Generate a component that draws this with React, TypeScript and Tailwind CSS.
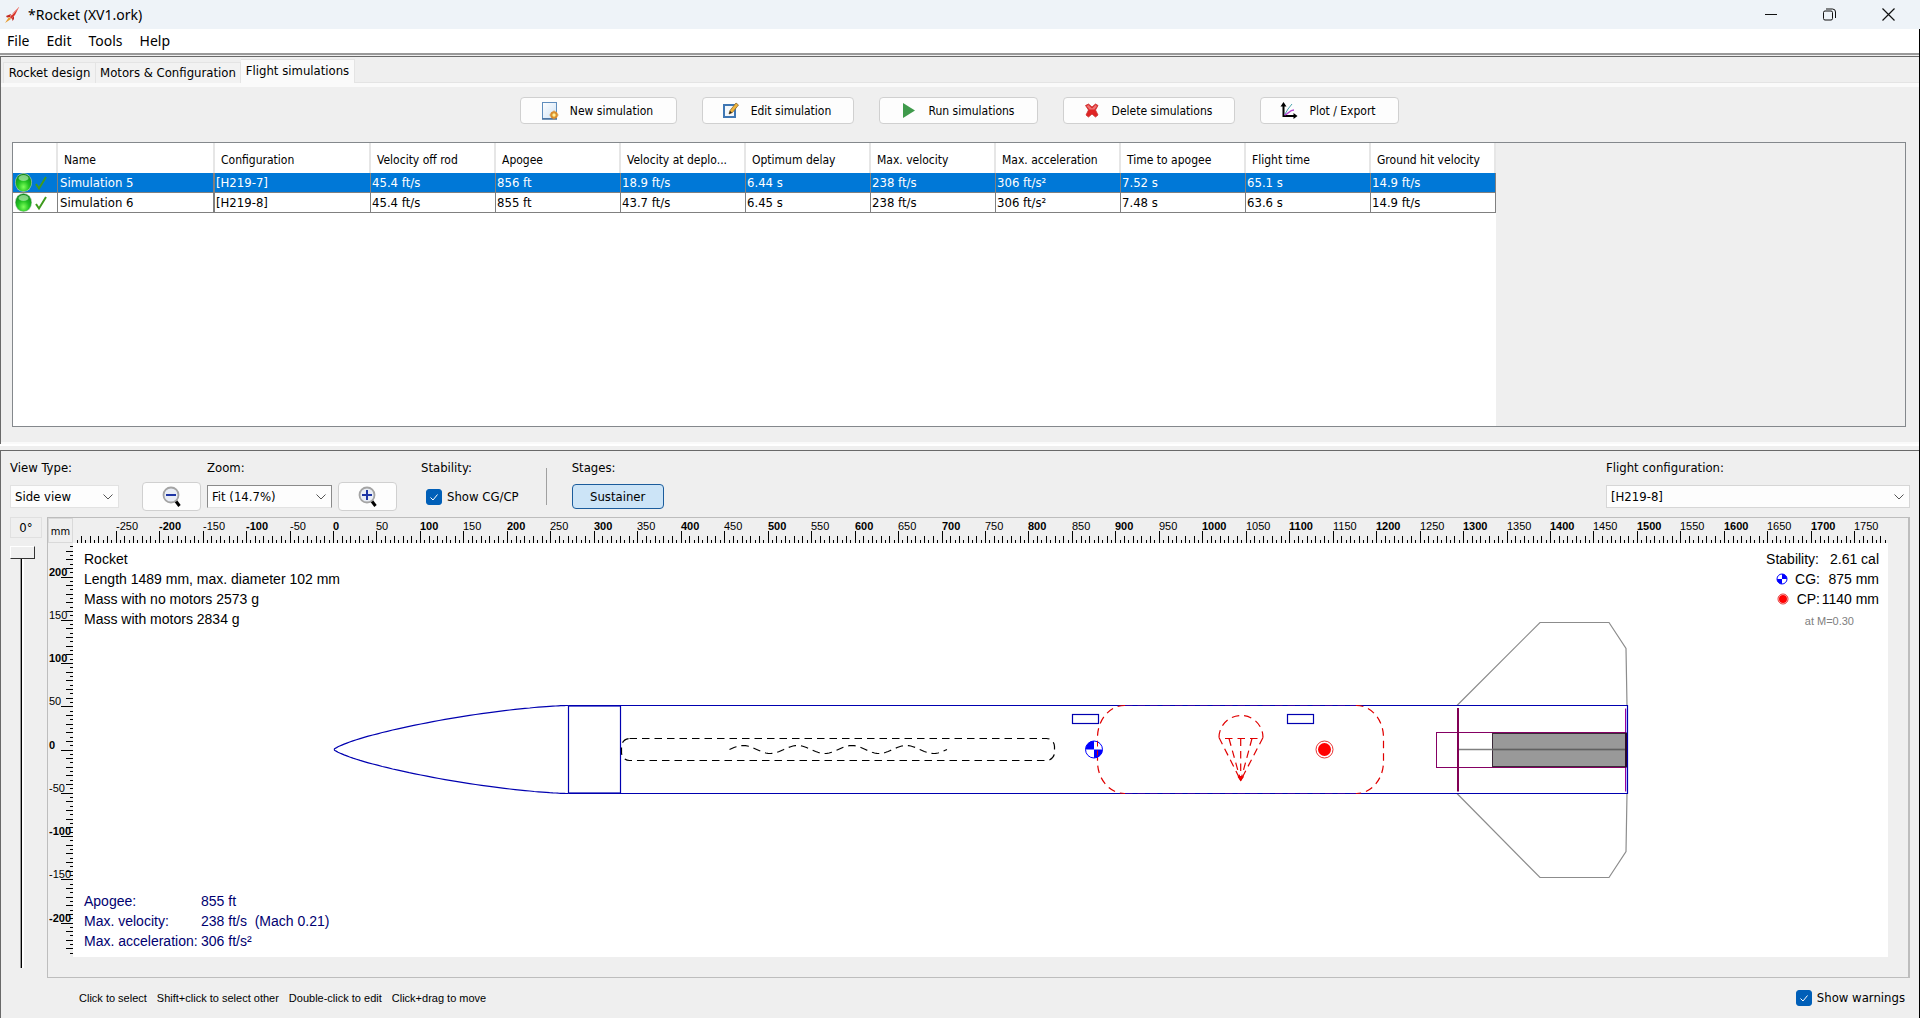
import { useState } from 'react'
import type { ReactNode } from 'react'

interface Simulation {
  name: string
  values: string[]
}

const columns = [
  'Name',
  'Configuration',
  'Velocity off rod',
  'Apogee',
  'Velocity at deplo...',
  'Optimum delay',
  'Max. velocity',
  'Max. acceleration',
  'Time to apogee',
  'Flight time',
  'Ground hit velocity',
]

const simulations: Simulation[] = [
  {
    name: 'Simulation 5',
    values: ['[H219-7]', '45.4 ft/s', '856 ft', '18.9 ft/s', '6.44 s', '238 ft/s', '306 ft/s²', '7.52 s', '65.1 s', '14.9 ft/s'],
  },
  {
    name: 'Simulation 6',
    values: ['[H219-8]', '45.4 ft/s', '855 ft', '43.7 ft/s', '6.45 s', '238 ft/s', '306 ft/s²', '7.48 s', '63.6 s', '14.9 ft/s'],
  },
]

// pixels per millimetre at the current zoom
const SCALE_X = 0.8693
const SCALE_Y = 0.865
const ORIGIN_X = 260
const ORIGIN_Y = 206.5

function RocketIcon() {
  return (
    <svg width="16" height="18" viewBox="0 0 16 18">
      <path d="M15 1 10 6 6 11 7 13 11 9Z" fill="#d8352b" />
      <path d="M7 8 2 10 3 11.500 6 11ZM8 12 8.500 15 10 13 10 10Z" fill="#c22a24" />
      <path d="M5 11 1 17 7 13Z" fill="#e79a2c" />
      <path d="M15 1 8 9" stroke="#f2a69f" strokeWidth="1" />
    </svg>
  )
}

function TitleBar() {
  return (
    <header className="flex h-[29px] shrink-0 items-center bg-[#eef3f8] pr-0.5 pl-1 font-['Noto_Sans',sans-serif] text-sm">
      <RocketIcon />
      <h1 className="ml-2 text-black">*Rocket (XV1.ork)</h1>
      <div className="ml-auto flex h-full">
        <button type="button" aria-label="Minimize" className="flex w-[58px] items-center justify-center">
          <svg width="12" height="12" stroke="#111">
            <path d="M0 5.5H12" />
          </svg>
        </button>
        <button type="button" aria-label="Restore" className="flex w-[58px] items-center justify-center">
          <svg width="13" height="13" fill="none" stroke="#111">
            <rect x="0.5" y="3" width="9" height="9" rx="1.5" />
            <path d="M3 1H9.500A3 3 0 0 1 12.500 4V10" />
          </svg>
        </button>
        <button type="button" aria-label="Close" className="flex w-[60px] items-center justify-center">
          <svg width="13" height="13" stroke="#111" strokeWidth="1.2">
            <path d="M0.500 0.500 12.500 12.500M12.500 0.500 0.500 12.500" />
          </svg>
        </button>
      </div>
    </header>
  )
}

function MenuBar() {
  return (
    <nav className="flex h-[26px] shrink-0 items-center gap-[17px] border-b-2 border-[#9a9a9a] bg-white pl-[7px] font-['Noto_Sans',sans-serif] text-sm">
      {['File', 'Edit', 'Tools', 'Help'].map((item) => (
        <button type="button" key={item}>
          {item}
        </button>
      ))}
    </nav>
  )
}

function Tabs() {
  return (
    <div role="tablist" className="flex h-[30px] items-end border-b-4 border-[#fafafa] pl-0.5">
      <button type="button" role="tab" aria-selected="false" className="h-[21px] w-[93px] border border-b-0 border-[#e4e4e4] bg-[#f2f2f2]">
        Rocket design
      </button>
      <button type="button" role="tab" aria-selected="false" className="h-[21px] w-[145px] border border-l-0 border-b-0 border-[#e4e4e4] bg-[#f2f2f2]">
        Motors &amp; Configuration
      </button>
      <button type="button" role="tab" aria-selected="true" className="h-6 w-[114px] border border-l-0 border-b-0 border-[#e4e4e4] bg-[#fafafa] pb-0.5">
        Flight simulations
      </button>
      <div className="flex-1 border-b border-[#e4e4e4]" />
    </div>
  )
}

function NewIcon() {
  return (
    <svg width="18" height="20" viewBox="0 0 18 20">
      <defs>
        <linearGradient id="page" x1="0" y1="0" x2="1" y2="1">
          <stop offset="0" stopColor="#ffffff" />
          <stop offset="1" stopColor="#cfe2f5" />
        </linearGradient>
      </defs>
      <rect x="1.500" y="1.500" width="14" height="16" fill="url(#page)" stroke="#5f8dbd" />
      <path d="M1 18H16" stroke="#466f9e" strokeWidth="1.500" />
      <circle cx="13" cy="14" r="3" fill="#f8c64a" stroke="#d88a2a" strokeWidth="1.500" />
      <path d="M13 9.500V18.500M8.500 14H17.500M10 11 16 17M16 11 10 17" stroke="#dc9536" strokeWidth="1" />
      <circle cx="13" cy="14" r="1.500" fill="#fff0a0" />
    </svg>
  )
}

function EditIcon() {
  return (
    <svg width="18" height="18" viewBox="0 0 18 18">
      <rect x="2" y="3" width="11" height="12" fill="#f4f8fc" stroke="#3f77b4" strokeWidth="2" />
      <path d="M7 12 8 8.500 14 1 16.500 3 10.500 10.500Z" fill="#f0b43c" stroke="#8a6a30" strokeWidth="0.800" />
      <path d="M7 12 8 9 10 10.500Z" fill="#222" />
    </svg>
  )
}

function RunIcon() {
  return (
    <svg width="18" height="18" viewBox="0 0 18 18">
      <path d="M3 1 15 8.500 3 16Z" fill="#3f9a4b" />
    </svg>
  )
}

function DeleteIcon() {
  return (
    <svg width="18" height="18" viewBox="0 0 18 18">
      <path
        d="M2.500 3.500 5.500 2 9 5 12.500 2 15 3.500 12.500 8 15 13 12.500 15 9 12 5.500 15 3 13 5.500 8Z"
        fill="#e02424"
        stroke="#c83030"
        strokeWidth="0.800"
      />
      <path d="M3.500 4 5.500 3 9 6.500 12.500 3 14 4 11.500 7.500H6.500Z" fill="#ee7474" />
    </svg>
  )
}

function PlotIcon() {
  return (
    <svg width="18" height="18" viewBox="0 0 18 18" fill="none">
      <path d="M3.500 2V14H16" stroke="#000" strokeWidth="2" />
      <path d="M0.500 4.500 3.500 0 6.500 4.500ZM13.500 11 17.500 14 13.500 17Z" fill="#000" />
      <path d="M4.500 13 8 7 12 2" stroke="#4aa3ad" />
      <path d="M4.500 13C9 12 9 8 14 8" stroke="#b445d0" strokeWidth="1.500" />
    </svg>
  )
}

interface ActionButtonProps {
  icon: ReactNode
  label: string
  className: string
}

function ActionButton({ icon, label, className }: ActionButtonProps) {
  return (
    <button
      type="button"
      className={`flex h-[27px] items-center justify-center gap-[11px] rounded border border-[#d0d0d0] bg-[#fdfdfd] pr-0.5 text-xs ${className}`}
    >
      {icon}
      {label}
    </button>
  )
}

function StatusCell({ id }: { id: string }) {
  return (
    <svg width="40" height="19" viewBox="0 0 40 19" className="block">
      <defs>
        <radialGradient id={id} cx="0.5" cy="0.75" r="0.7">
          <stop offset="0" stopColor="#7dff5a" />
          <stop offset="0.5" stopColor="#22c322" />
          <stop offset="1" stopColor="#118a1c" />
        </radialGradient>
      </defs>
      <ellipse cx="10.500" cy="9.500" rx="8.500" ry="9.500" fill="#9fc5a4" />
      <ellipse cx="10.500" cy="9.500" rx="7.800" ry="8.800" fill={`url(#${id})`} />
      <ellipse cx="10.500" cy="5" rx="5" ry="3" fill="#c9f5c4" opacity="0.600" />
      <path d="M23 11 26 15.500 33 4" fill="none" stroke="#3f9a1e" strokeWidth="2" />
    </svg>
  )
}

function SimulationTable() {
  const [selected, setSelected] = useState(0)

  return (
    <div className="mr-[13px] mb-[15px] ml-[11px] flex flex-1 overflow-hidden border border-[#84888c]">
      <div className="bg-white">
        <table className="w-[1483px] table-fixed border-separate border-spacing-0 text-left">
          <colgroup>
            <col className="w-[45px]" />
            <col className="w-[157px]" />
            <col className="w-[156px]" />
          </colgroup>
          <thead>
            <tr className="text-xs">
              <th aria-label="Status" className="h-[30px] border-r-2 border-[#e6e6e6] p-0" />
              {columns.map((column) => (
                <th key={column} scope="col" className="h-[30px] border-r-2 border-[#e6e6e6] pt-[3px] pr-0 pb-0 pl-[6px] font-normal whitespace-nowrap">
                  {column}
                </th>
              ))}
            </tr>
          </thead>
          <tbody>
            {simulations.map((sim, index) => (
              <tr
                key={sim.name}
                onClick={() => setSelected(index)}
                className={index === selected ? 'bg-[#0078d7] leading-4 text-white' : 'bg-white leading-4'}
              >
                <td className="h-5 border-r border-b border-[#808080] p-0">
                  <StatusCell id={`ball-${index}`} />
                </td>
                <td className="h-5 border-r-2 border-b border-[#808080] py-0 pr-0 pl-0.5">{sim.name}</td>
                {sim.values.map((value, i) => (
                  <td key={columns[i + 1]} className="h-5 border-r border-b border-[#808080] py-0 pr-0 pl-px">
                    {value}
                  </td>
                ))}
              </tr>
            ))}
          </tbody>
        </table>
      </div>
    </div>
  )
}

function SimulationPanel() {
  return (
    <section className="mt-px flex h-[388px] shrink-0 flex-col border-t border-l border-[#696969]">
      <Tabs />
      <div className="flex flex-1 flex-col border-b-2 border-[#fafafa]">
        <div className="flex justify-center gap-[25px] pt-[10px] pr-0.5 pb-[18px]">
          <ActionButton icon={<NewIcon />} label="New simulation" className="w-[157px]" />
          <ActionButton icon={<EditIcon />} label="Edit simulation" className="w-[152px]" />
          <ActionButton icon={<RunIcon />} label="Run simulations" className="w-[159px]" />
          <ActionButton icon={<DeleteIcon />} label="Delete simulations" className="w-[172px]" />
          <ActionButton icon={<PlotIcon />} label="Plot / Export" className="w-[139px]" />
        </div>
        <SimulationTable />
      </div>
    </section>
  )
}

interface SelectBoxProps {
  id: string
  label: string
  options: string[]
  className: string
}

function SelectBox({ id, label, options, className }: SelectBoxProps) {
  return (
    <div className="flex flex-col gap-1">
      <label htmlFor={id} className="h-5 leading-5">
        {label}
      </label>
      <div className="relative flex h-[29px] items-center">
        <select id={id} className={`h-[23px] appearance-none border bg-[#fdfdfd] pl-1 ${className}`}>
          {options.map((option) => (
            <option key={option}>{option}</option>
          ))}
        </select>
        <svg width="10" height="6" className="pointer-events-none absolute right-1.5" fill="none" stroke="#555">
          <path d="M0.500 0.500 5 5 9.500 0.500" />
        </svg>
      </div>
    </div>
  )
}

function ZoomButton({ label, plus }: { label: string; plus?: boolean }) {
  return (
    <button
      type="button"
      aria-label={label}
      className="flex h-[29px] w-[59px] items-center justify-center rounded border border-[#d0d0d0] bg-[#fdfdfd]"
    >
      <svg width="20" height="22" viewBox="0 0 20 22">
        <path d="M13 14 17.500 20" stroke="#000" strokeWidth="3" />
        <circle cx="9" cy="9" r="7.500" fill="#e9edf5" stroke="#a4a4a4" strokeWidth="1.800" />
        <path d={plus ? 'M4 9H14M9 4V14' : 'M4 9H14'} stroke="#1d35a5" strokeWidth="2" />
      </svg>
    </button>
  )
}

function CheckBox({ label }: { label: string }) {
  return (
    <label className="flex items-center gap-[5px]">
      <span className="relative flex h-4 w-4">
        <input type="checkbox" defaultChecked className="peer h-4 w-4 appearance-none rounded-[3px] border border-[#888] bg-white checked:border-[#005fb8] checked:bg-[#005fb8]" />
        <svg width="16" height="16" className="pointer-events-none absolute hidden peer-checked:block" fill="none" stroke="#fff">
          <path d="M4.500 8.500 7 11 11.500 5.500" />
        </svg>
      </span>
      {label}
    </label>
  )
}

function ViewToolbar() {
  return (
    <div className="flex items-end pt-[7px] pr-[9px] pl-[9px]">
      <SelectBox id="view-type" label="View Type:" options={['Side view', 'Back view']} className="w-[109px] border-[#e2e2e2]" />
      <div className="ml-[23px] flex items-end gap-[6px]">
        <ZoomButton label="Zoom out" />
        <SelectBox id="zoom" label="Zoom:" options={['Fit (14.7%)', '25%', '50%', '100%']} className="w-[125px] border-[#8a8a8a] border-b-[#e2e2e2]" />
        <ZoomButton label="Zoom in" plus />
      </div>
      <div className="ml-6 flex flex-col gap-1">
        <span className="h-5 leading-5">Stability:</span>
        <div className="flex h-[29px] items-center pl-[5px]">
          <CheckBox label="Show CG/CP" />
        </div>
      </div>
      <div className="mb-[6px] ml-[27px] h-[37px] w-px bg-[#a0a0a0]" />
      <div className="ml-[25px] flex flex-col gap-1">
        <span className="h-5 leading-5">Stages:</span>
        <div className="flex h-[29px] items-center">
          <button type="button" aria-pressed="true" className="h-[25px] w-[92px] rounded border border-[#1b5c9c] bg-[#cce4f7]">
            Sustainer
          </button>
        </div>
      </div>
      <div className="ml-auto">
        <SelectBox id="flight-config" label="Flight configuration:" options={['[H219-8]', '[H219-7]']} className="w-[304px] border-[#d6d6d6]" />
      </div>
    </div>
  )
}

// every 5 mm, as far as the view reaches
function rulerMarks(from: number, to: number) {
  const marks: number[] = []
  for (let mm = from; mm <= to; mm += 5) marks.push(mm)
  return marks
}

function tickLength(mm: number) {
  if (mm % 50 === 0) return 12
  return mm % 10 === 0 ? 7 : 3
}

function HorizontalRuler() {
  return (
    <svg className="h-[25px] w-full font-['Liberation_Sans',Arial,sans-serif] text-[11px]">
      {rulerMarks(-295, 1785).map((mm) => {
        const x = Math.round(ORIGIN_X + mm * SCALE_X)
        return (
          <g key={mm}>
            <rect x={x} y={25 - tickLength(mm)} width="1" height={tickLength(mm)} />
            {mm % 50 === 0 && (
              <text x={x} y="12" fontWeight={mm % 100 === 0 ? 700 : 400}>
                {mm}
              </text>
            )}
          </g>
        )
      })}
    </svg>
  )
}

function VerticalRuler() {
  return (
    <svg className="h-full w-[25px] shrink-0 font-['Liberation_Sans',Arial,sans-serif] text-[11px]">
      {rulerMarks(-235, 235).map((mm) => {
        const y = Math.round(ORIGIN_Y - mm * SCALE_Y)
        return (
          <g key={mm}>
            <rect x={25 - tickLength(mm)} y={y} width={tickLength(mm)} height="1" />
            {mm % 50 === 0 && (
              <text x="1" y={y - 1} fontWeight={mm % 100 === 0 ? 700 : 400}>
                {mm}
              </text>
            )}
          </g>
        )
      })}
    </svg>
  )
}

// Haack series nose cone outline, tip at the origin
function nosePath(length: number, radius: number, side: 1 | -1) {
  const points: string[] = []
  for (let i = 0; i <= 60; i++) {
    const theta = (Math.PI * i) / 60
    const x = (length * (1 - Math.cos(theta))) / 2
    const r = radius * Math.sqrt((theta - Math.sin(2 * theta) / 2) / Math.PI)
    points.push(`${x.toFixed(1)} ${(side * r).toFixed(1)}`)
  }
  return `M${points.join('L')}`
}

function wavePath(start: number, end: number, periods: number, height: number) {
  const points: string[] = []
  for (let i = 0; i <= 96; i++) {
    const x = start + ((end - start) * i) / 96
    const y = -height * Math.sin((2 * Math.PI * periods * i) / 96)
    points.push(`${x.toFixed(1)} ${y.toFixed(1)}`)
  }
  return `M${points.join('L')}`
}

function CenterOfGravity({ r }: { r: number }) {
  return (
    <>
      <circle r={r} fill="#fff" stroke="#00f" />
      <path d={`M0 0V${-r}A${r} ${r} 0 0 0 ${-r} 0ZM0 0V${r}A${r} ${r} 0 0 0 ${r} 0Z`} fill="#00f" />
    </>
  )
}

function CenterOfPressure({ r, dot }: { r: number; dot: number }) {
  return (
    <>
      <circle r={r} fill="#fff" stroke="#e00000" strokeWidth="0.800" />
      <circle r={dot} fill="#f00" />
    </>
  )
}

function RocketDrawing() {
  return (
    <svg className="absolute inset-0 h-full w-full" fill="none" role="img" aria-label="Side view of the rocket">
      <g transform="translate(261 206.5)">
        <g stroke="#8c8c8c" strokeWidth="1.200">
          <path d="M1123 -44 1206 -127H1275L1292 -101 1293 -44" />
          <path d="M1123 44 1206 128H1275L1292 102 1293 44" />
        </g>

        <g stroke="#0000b0" strokeWidth="1.200">
          <path d={nosePath(234.5, 44, -1)} />
          <path d={nosePath(234.5, 44, 1)} />
          <path d="M234.500 -44H1293.500V44H234.500" />
          <rect x="234.500" y="-43.500" width="52" height="87" />
          <rect x="738.500" y="-35" width="26" height="9" />
          <rect x="953.500" y="-35" width="26" height="9" />
        </g>

        <g stroke="#000" strokeWidth="1.200" strokeDasharray="7.500 5">
          <rect x="287.500" y="-11" width="433" height="22" rx="8" />
          <path d={wavePath(395.5, 613, 4, 4)} />
        </g>

        <g stroke="#e00000" strokeDasharray="7.500 5" strokeWidth="1.200">
          <path d="M791 -44A27 32 0 0 0 763.500 -12V12A27 32 0 0 0 791 44" />
          <path d="M1022 -44A27 32 0 0 1 1049.500 -12V12A27 32 0 0 1 1022 44" />
          <path d="M791 -44H1022M791 44H1022" stroke="#70009c" opacity="0.400" />
          <path d="M885 -12A22 22 0 0 1 929 -12" />
          <path d="M885 -12 906.700 31M929 -12 906.700 31" />
          <path d="M891 -11H925M895 -11 906.700 31M906.700 -11V31M918 -11 906.700 31" />
          <path d="M904 27 906.700 31 909.500 27" fill="#f00" strokeDasharray="none" />
        </g>

        <rect x="1102.500" y="-17" width="191" height="35" stroke="#850063" />
        <rect x="1158.500" y="-16" width="135" height="33" fill="#999" stroke="#3a2a38" />
        <path d="M1123 0H1292" stroke="#808080" strokeWidth="1.500" />
        <path d="M1158 0H1292" stroke="#606060" strokeWidth="1.500" />
        <path d="M1124 -41.500V42" stroke="#800055" strokeWidth="2" />
        <path d="M1291.500 -41V-17M1291.500 18V42" stroke="#9a009a" />
        <path d="M1292.500 -41V42" stroke="#b8b8ff" />
        <path d="M1292 -17V18" stroke="#2a0a2a" strokeWidth="2" />
        <path d="M1293.500 -44V44" stroke="#0000b0" />

        <g transform="translate(760 0)">
          <CenterOfGravity r={8.5} />
          <path d="M3.500 -8V8" stroke="#e00000" strokeDasharray="5 4" />
        </g>
        <g transform="translate(990.500 0)">
          <CenterOfPressure r={8.5} dot={6.5} />
        </g>
      </g>
    </svg>
  )
}

function DesignView() {
  return (
    <div className="relative flex-1 overflow-hidden bg-white font-['Liberation_Sans',Arial,sans-serif] text-sm leading-5">
      <RocketDrawing />
      <div className="absolute top-1.5 left-[11px]">
        <p>Rocket</p>
        <p>Length 1489 mm, max. diameter 102 mm</p>
        <p>Mass with no motors 2573 g</p>
        <p>Mass with motors 2834 g</p>
      </div>
      <dl className="absolute bottom-1.5 left-[11px] grid grid-cols-[117px_auto] text-[#000070]">
        <dt>Apogee:</dt>
        <dd>855 ft</dd>
        <dt>Max. velocity:</dt>
        <dd className="whitespace-pre">238 ft/s  (Mach 0.21)</dd>
        <dt>Max. acceleration:</dt>
        <dd>306 ft/s²</dd>
      </dl>
      <div className="absolute top-1.5 right-[9px] flex flex-col text-right">
        <p>
          Stability:<span className="inline-block w-[60px]">2.61 cal</span>
        </p>
        <p className="flex items-center justify-end">
          <svg width="12" height="12" viewBox="-6 -6 12 12" className="mr-[7px]">
            <g transform="scale(-1 1)">
              <CenterOfGravity r={5} />
            </g>
          </svg>
          CG:<span className="w-[59px]">875 mm</span>
        </p>
        <p className="flex items-center justify-end">
          <svg width="12" height="12" viewBox="-6 -6 12 12" className="mr-2">
            <CenterOfPressure r={5} dot={4} />
          </svg>
          CP:<span className="w-[59px]">1140 mm</span>
        </p>
        <p className="mr-[25px] text-[11px] leading-6 text-[#808080]">at M=0.30</p>
      </div>
    </div>
  )
}

function RotationControl() {
  return (
    <div className="flex w-8 flex-col">
      <output className="flex h-[21px] w-8 items-center justify-center border border-[#e0e0e0]">0°</output>
      <input
        type="range"
        aria-label="Rotation"
        min={0}
        max={360}
        defaultValue={360}
        className="mx-0.5 mt-2 mb-2.5 w-[25px] flex-1 appearance-none bg-[linear-gradient(to_right,transparent_10px,#9a9a9a_10px,#9a9a9a_11px,#000_11px,#000_12px,#fff_12px,#fff_14px,transparent_14px)] [direction:rtl] [writing-mode:vertical-lr] [&::-webkit-slider-thumb]:h-[13px] [&::-webkit-slider-thumb]:w-[25px] [&::-webkit-slider-thumb]:appearance-none [&::-webkit-slider-thumb]:border [&::-webkit-slider-thumb]:border-t-white [&::-webkit-slider-thumb]:border-r-[#333] [&::-webkit-slider-thumb]:border-b-[#333] [&::-webkit-slider-thumb]:border-l-white [&::-webkit-slider-thumb]:bg-[#efefef]"
      />
    </div>
  )
}

function ViewPanel() {
  return (
    <section className="flex min-h-0 flex-1 flex-col border-t border-l border-[#696969]">
      <ViewToolbar />
      <div className="mt-1.5 flex min-h-0 flex-1 gap-[5px] pr-[9px] pl-[9px]">
        <RotationControl />
        <div className="flex min-w-0 flex-1 flex-col border border-r-2 border-[#bdbdbd] pr-5 pb-5">
          <div className="flex">
            <div className="flex h-[25px] w-[25px] shrink-0 items-center justify-center border border-[#d9d9d9] pt-1 text-[11px]">mm</div>
            <HorizontalRuler />
          </div>
          <div className="flex min-h-0 flex-1">
            <VerticalRuler />
            <DesignView />
          </div>
        </div>
      </div>
      <footer className="flex h-10 shrink-0 items-center pr-[14px] pl-[78px]">
        <ul className="flex gap-[10px] font-['Liberation_Sans',Arial,sans-serif] text-[11px]">
          <li>Click to select</li>
          <li>Shift+click to select other</li>
          <li>Double-click to edit</li>
          <li>Click+drag to move</li>
        </ul>
        <div className="ml-auto">
          <CheckBox label="Show warnings" />
        </div>
      </footer>
    </section>
  )
}

export default function App() {
  return (
    <div className="flex h-screen min-h-[760px] flex-col overflow-hidden bg-white pb-px font-['DejaVu_Sans_Condensed','DejaVu_Sans',sans-serif] text-[13px] text-black">
      <TitleBar />
      <div className="flex min-h-0 flex-1 flex-col border-r border-black bg-[#efefef]">
        <MenuBar />
        <SimulationPanel />
        <div className="h-[6px] shrink-0 border-t-2 border-white" />
        <ViewPanel />
      </div>
    </div>
  )
}
